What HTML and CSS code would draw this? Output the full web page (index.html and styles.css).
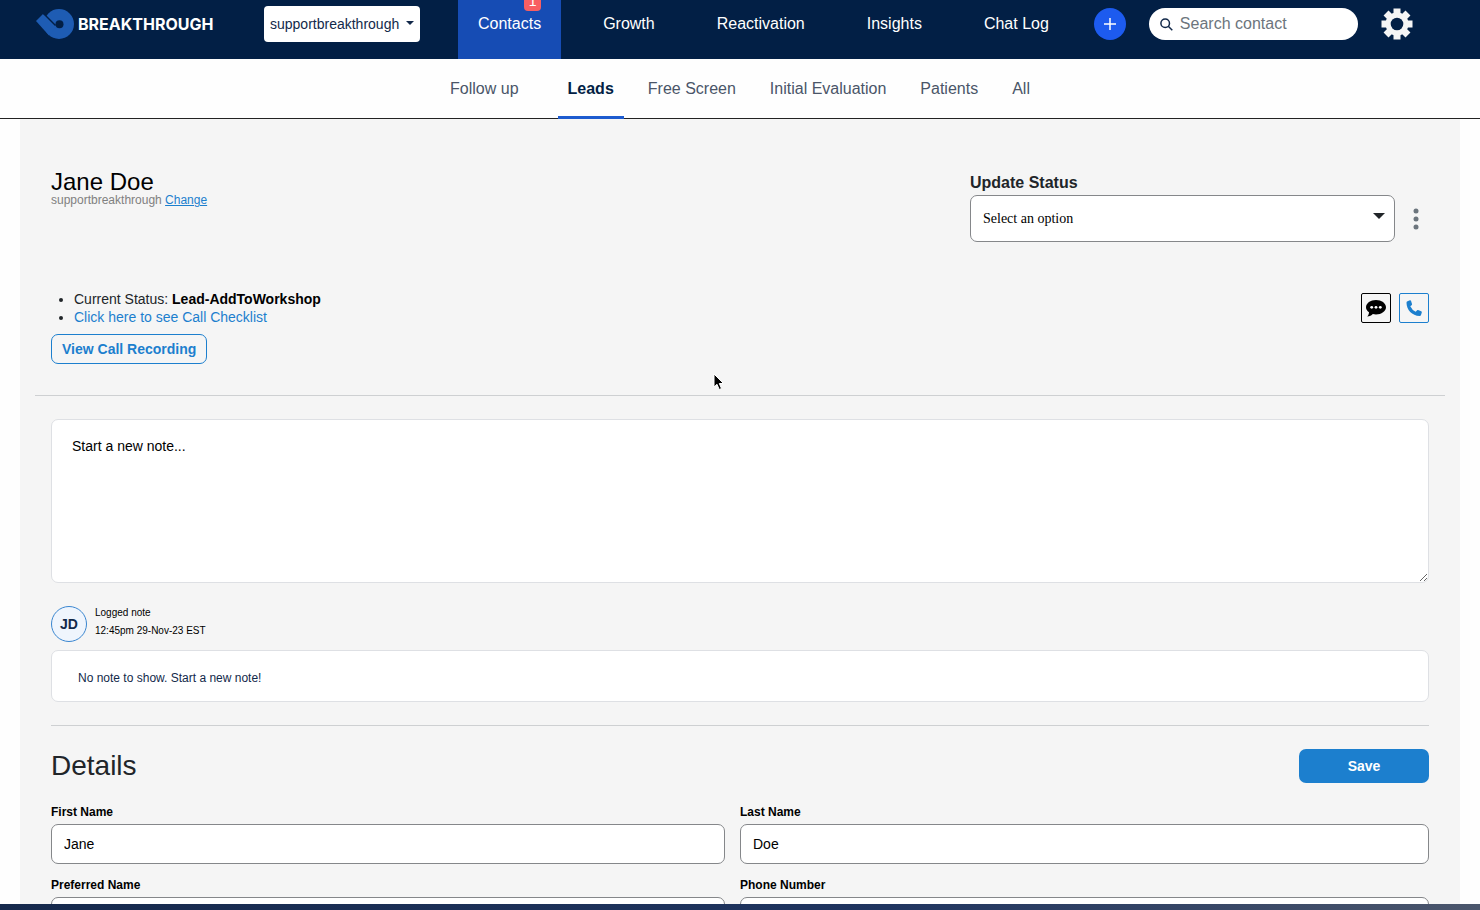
FILE: index.html
```html
<!DOCTYPE html>
<html lang="en">
  <head>
    <meta charset="UTF-8" />
    <meta name="viewport" content="width=device-width, initial-scale=1.0" />
    <title>Jane Doe - Leads</title>
    <link rel="stylesheet" href="styles.css">
  </head>
  <body>
    <header class="topbar">
      <a class="logo" href="#">
        <svg width="39" height="32" viewBox="0 0 39 32" aria-hidden="true">
          <circle cx="23" cy="16" r="15" fill="#1e5cb3" />
          <path fill="#1e5cb3" d="M0 13L7 6L22 17L13 27.500Z" />
          <path fill="none" stroke="#021f45" stroke-width="1.400" d="M7.500 5.500L19.500 17.500" />
          <circle cx="23.500" cy="16.300" r="4" fill="#021f45" />
        </svg>
        <span>BREAKTHROUGH</span>
      </a>

      <div class="clinic">
        <select class="clinic-select" aria-label="Clinic">
          <option>supportbreakthrough</option>
        </select>
      </div>

      <nav class="main-nav">
        <a class="active" href="#">Contacts<span class="badge">1</span></a>
        <a href="#">Growth</a>
        <a href="#">Reactivation</a>
        <a href="#">Insights</a>
        <a href="#">Chat Log</a>
      </nav>

      <button class="add-btn" type="button" aria-label="Add contact">
        <svg width="14" height="14" viewBox="0 0 14 14"><path d="M7 1v12M1 7h12" stroke="#fff" stroke-width="1.500" /></svg>
      </button>

      <label class="search">
        <svg width="13" height="13" viewBox="0 0 13 13" fill="none" stroke="#12294a" stroke-width="1.500">
          <circle cx="5.200" cy="5.200" r="4.300" />
          <path d="M8.300 8.300L12.300 12.300" />
        </svg>
        <input type="text" placeholder="Search contact" aria-label="Search contact">
      </label>

      <button class="gear-btn" type="button" aria-label="Settings">
        <svg width="32" height="32" viewBox="-16 -16 32 32">
          <g fill="#f5f5f5">
            <rect x="-3.500" y="-15.500" width="7" height="31" />
            <rect x="-3.500" y="-15.500" width="7" height="31" transform="rotate(45)" />
            <rect x="-3.500" y="-15.500" width="7" height="31" transform="rotate(90)" />
            <rect x="-3.500" y="-15.500" width="7" height="31" transform="rotate(135)" />
            <circle r="11.500" />
          </g>
          <circle r="6.300" fill="#021f45" />
        </svg>
      </button>
    </header>

    <nav class="sub-nav">
      <a class="first" href="#">Follow up</a>
      <a class="active" href="#">Leads</a>
      <a href="#">Free Screen</a>
      <a href="#">Initial Evaluation</a>
      <a href="#">Patients</a>
      <a href="#">All</a>
    </nav>

    <main class="page">
      <section class="contact">
        <div class="contact-head">
          <div>
            <h1>Jane Doe</h1>
            <p class="clinic-name">supportbreakthrough <a href="#">Change</a></p>
          </div>
          <div class="status">
            <label for="status">Update Status</label>
            <div class="status-row">
              <div class="status-box">
                <select id="status">
                  <option>Select an option</option>
                </select>
              </div>
              <button class="more-btn" type="button" aria-label="More">
                <svg width="6" height="22" viewBox="0 0 6 22" fill="#6c757d">
                  <circle cx="3" cy="3" r="2.500" />
                  <circle cx="3" cy="11" r="2.500" />
                  <circle cx="3" cy="19" r="2.500" />
                </svg>
              </button>
            </div>
          </div>
        </div>

        <div class="contact-info">
          <div>
            <ul>
              <li>Current Status: <strong>Lead-AddToWorkshop</strong></li>
              <li><a href="#">Click here to see Call Checklist</a></li>
            </ul>
            <button class="outline-btn" type="button">View Call Recording</button>
          </div>
          <div class="contact-actions">
            <button class="icon-btn" type="button" aria-label="Message">
              <svg width="20" height="18" viewBox="0 0 20 18">
                <path d="M10 1C4.500 1 0 4.200 0 8.200C0 10.300 1.200 12 3 13.300C3 15 2.200 16.600 1.200 17.600C3.600 17.600 5.600 16.400 6.800 15.100C7.800 15.300 8.900 15.400 10 15.400C15.500 15.400 20 12.200 20 8.200S15.500 1 10 1Z" />
                <g fill="#fff"><circle cx="5.700" cy="8.300" r="1.400" /><circle cx="10" cy="8.300" r="1.400" /><circle cx="14.300" cy="8.300" r="1.400" /></g>
              </svg>
            </button>
            <button class="icon-btn blue" type="button" aria-label="Call">
              <svg width="16" height="16" viewBox="0 0 16 16" fill="#1c7fce">
                <path d="M1.500 1.200L3.900 .2Q4.700 0 5 .8L6 4Q6.200 4.700 5.600 5.200L4.300 6.200Q6 10 9.700 11.700L10.900 10.400Q11.300 9.900 12 10.100L15.200 11.300Q16 11.700 15.800 12.400L15 15Q14.700 15.900 13.700 15.900C6 15.900 .5 9.500 .5 2.700Q.5 1.600 1.500 1.200Z" />
              </svg>
            </button>
          </div>
        </div>
      </section>

      <section class="notes">
        <textarea class="new-note" placeholder="Start a new note..." aria-label="New note"></textarea>
        <div class="note-meta">
          <span class="avatar">JD</span>
          <div>
            <p>Logged note</p>
            <p>12:45pm 29-Nov-23 EST</p>
          </div>
        </div>
        <p class="note-card">No note to show. Start a new note!</p>
      </section>

      <form class="details">
        <div class="details-head">
          <h2>Details</h2>
          <button class="save-btn" type="button">Save</button>
        </div>
        <div class="fields">
          <div class="field">
            <label for="first-name">First Name</label>
            <input id="first-name" type="text" value="Jane">
          </div>
          <div class="field">
            <label for="last-name">Last Name</label>
            <input id="last-name" type="text" value="Doe">
          </div>
          <div class="field">
            <label for="preferred-name">Preferred Name</label>
            <input id="preferred-name" type="text">
          </div>
          <div class="field">
            <label for="phone">Phone Number</label>
            <input id="phone" type="tel">
          </div>
        </div>
      </form>
    </main>

    <footer class="bottom-strip"></footer>

    <svg class="cursor" width="12" height="18" viewBox="0 0 12 18" aria-hidden="true">
      <path d="M1 1V14L4 11.300L6.200 16.500L8.500 15.500L6.300 10.500H10.500Z" stroke="#fff" stroke-width="1" />
    </svg>
  </body>
</html>
```
FILE: styles.css
```css
* {
  box-sizing: border-box;
}

body {
  display: flex;
  flex-direction: column;
  height: 100vh;
  margin: 0;
  overflow: hidden;
  background: #fefefe;
  color: #000;
  font-family: "Liberation Sans", Arial, sans-serif;
  font-size: 14px;
}

h1,
h2,
p,
ul {
  margin: 0;
}

a {
  color: #1c7fce;
  text-decoration: none;
}

button,
input,
select,
textarea {
  font-family: inherit;
  font-size: 14px;
}

button {
  padding: 0;
  cursor: pointer;
}

/* top bar */
.topbar {
  display: flex;
  flex-shrink: 0;
  align-items: flex-start;
  height: 59px;
  padding-left: 36px;
  background: #021f45;
}

.logo {
  display: flex;
  align-items: center;
  gap: 3px;
  width: 228px;
  height: 48px;
  color: #fff;
  font-family: Inter, sans-serif;
  font-size: 16px;
  font-weight: 700;
  line-height: 18px;
}

.clinic {
  position: relative;
  width: 156px;
  margin-top: 6px;
}

.clinic-select {
  width: 100%;
  height: 36px;
  padding: 0 6px;
  appearance: none;
  background: #fff;
  border: 0;
  border-radius: 4px;
  color: #12294a;
}

.clinic::after {
  content: "";
  position: absolute;
  top: 15px;
  right: 6px;
  border: 4px solid transparent;
  border-top-color: #12294a;
  border-bottom: 0;
  pointer-events: none;
}

.main-nav {
  display: flex;
  gap: 22px;
  margin-left: 38px;
}

.main-nav a {
  position: relative;
  height: 59px;
  padding: 0 20px;
  color: #fff;
  font-size: 16px;
  line-height: 48px;
}

.main-nav .active {
  background: #164cb4;
}

.badge {
  position: absolute;
  top: -9px;
  right: 20px;
  width: 17px;
  height: 20px;
  background: #f85f62;
  border-radius: 4px;
  font-size: 14px;
  line-height: 20px;
  text-align: center;
}

.add-btn {
  display: grid;
  place-items: center;
  width: 32px;
  height: 32px;
  margin: 8px 0 0 25px;
  background: #1d5bef;
  border: 0;
  border-radius: 50%;
}

.search {
  display: flex;
  align-items: center;
  gap: 7px;
  width: 209px;
  height: 32px;
  margin: 8px 0 0 23px;
  padding: 0 11px;
  background: #fff;
  border-radius: 16px;
}

.search svg {
  flex-shrink: 0;
}

.search input {
  width: 100%;
  min-width: 0;
  padding: 0;
  background: none;
  border: 0;
  font-size: 16px;
}

.search input::placeholder {
  color: #6c757d;
}

.gear-btn {
  height: 32px;
  margin: 8px 0 0 23px;
  background: none;
  border: 0;
}

/* second level tabs */
.sub-nav {
  display: flex;
  flex-shrink: 0;
  justify-content: center;
  gap: 14px;
  height: 60px;
  border-bottom: 1px solid #222;
}

.sub-nav a {
  height: 60px;
  padding: 0 10px;
  color: #4a5568;
  font-size: 16px;
  line-height: 60px;
}

.sub-nav .first {
  margin-right: 15px;
}

.sub-nav .active {
  border-bottom: 3px solid #1d5bcf;
  color: #021f45;
  font-weight: 700;
}

/* contact page */
.page {
  flex: 1;
  min-height: 0;
  margin: 0 20px;
  padding: 51px 15px 0;
  overflow: hidden;
  background: #f5f5f5;
}

.contact {
  padding: 0 16px 31px;
  border-bottom: 1px solid #ced0d2;
}

.contact-head,
.contact-info,
.details-head {
  display: flex;
  justify-content: space-between;
}

h1 {
  font-size: 24px;
  font-weight: 400;
  line-height: 24px;
}

.clinic-name {
  color: #808080;
  font-size: 12px;
  line-height: 12px;
}

.clinic-name a {
  text-decoration: underline;
}

.status {
  width: 459px;
}

.status label {
  display: block;
  padding-top: 1px;
  color: #212529;
  font-size: 16px;
  font-weight: 700;
  line-height: 24px;
}

.status-row {
  display: flex;
  align-items: center;
  gap: 18px;
}

.status-box {
  position: relative;
  flex: 1;
}

.status-box select {
  display: block;
  width: 100%;
  height: 47px;
  padding: 0 12px;
  appearance: none;
  background: #fff;
  border: 1px solid #85878a;
  border-radius: 7px;
  font-family: "Liberation Serif", serif;
}

.status-box::after {
  content: "";
  position: absolute;
  top: 18px;
  right: 10px;
  border: 6px solid transparent;
  border-top-color: #212529;
  border-bottom: 0;
  pointer-events: none;
}

.more-btn {
  display: flex;
  margin-right: 10px;
  background: none;
  border: 0;
}

.contact-info {
  margin-top: 48px;
}

.contact-info ul {
  padding-left: 23px;
  line-height: 18px;
}

.contact-info li {
  color: #212529;
}

.contact-info strong {
  color: #000;
}

.outline-btn {
  height: 30px;
  margin-top: 8px;
  padding: 0 10px;
  background: none;
  border: 1px solid #1c7fce;
  border-radius: 7px;
  color: #1c7fce;
  font-weight: 700;
}

.contact-actions {
  display: flex;
  gap: 8px;
  margin-top: 3px;
}

.icon-btn {
  display: grid;
  place-items: center;
  width: 30px;
  height: 30px;
  background: none;
  border: 1px solid #000;
  border-radius: 2px;
}

.icon-btn.blue {
  border-color: #1c7fce;
}

/* notes */
.notes {
  margin: 0 16px;
  padding: 23px 0;
  border-bottom: 1px solid #ced0d2;
}

.new-note {
  display: block;
  width: 100%;
  height: 164px;
  padding: 18px 20px;
  background: #fff;
  border: 1px solid #dee0e4;
  border-radius: 7px;
}

.new-note::placeholder {
  color: #000;
}

.note-meta {
  display: flex;
  gap: 8px;
  margin: 21px 0 8px;
  font-size: 10px;
  line-height: 18px;
}

.avatar {
  display: grid;
  place-items: center;
  width: 36px;
  height: 36px;
  margin-top: 2px;
  background: #eff5fd;
  border: 1px solid #3a86d0;
  border-radius: 50%;
  color: #12294a;
  font-size: 14px;
  font-weight: 700;
}

.note-card {
  padding: 18px 26px 14px;
  background: #fff;
  border: 1px solid #dee0e4;
  border-radius: 7px;
  color: #12294a;
  font-size: 12px;
  line-height: 18px;
}

/* details form */
.details {
  margin: 0 16px;
  padding-top: 23px;
}

h2 {
  color: #212529;
  font-size: 28px;
  font-weight: 400;
  line-height: 34px;
}

.save-btn {
  width: 130px;
  height: 34px;
  background: #1c7fce;
  border: 0;
  border-radius: 7px;
  color: #fff;
  font-weight: 700;
}

.fields {
  display: grid;
  grid-template-columns: 1fr 1fr;
  row-gap: 9px;
  margin-top: 17px;
}

.field:nth-child(odd) {
  padding-right: 15px;
}

.field label {
  display: block;
  font-size: 12px;
  font-weight: 700;
  line-height: 24px;
}

.field input {
  display: block;
  width: 100%;
  height: 40px;
  padding: 0 12px;
  background: #fff;
  border: 1px solid #85878a;
  border-radius: 7px;
}

.bottom-strip {
  flex-shrink: 0;
  height: 6px;
  background: linear-gradient(90deg, #16294c, #203560 60%, #4b566c);
}

.cursor {
  position: absolute;
  top: 373px;
  left: 713px;
}
```
